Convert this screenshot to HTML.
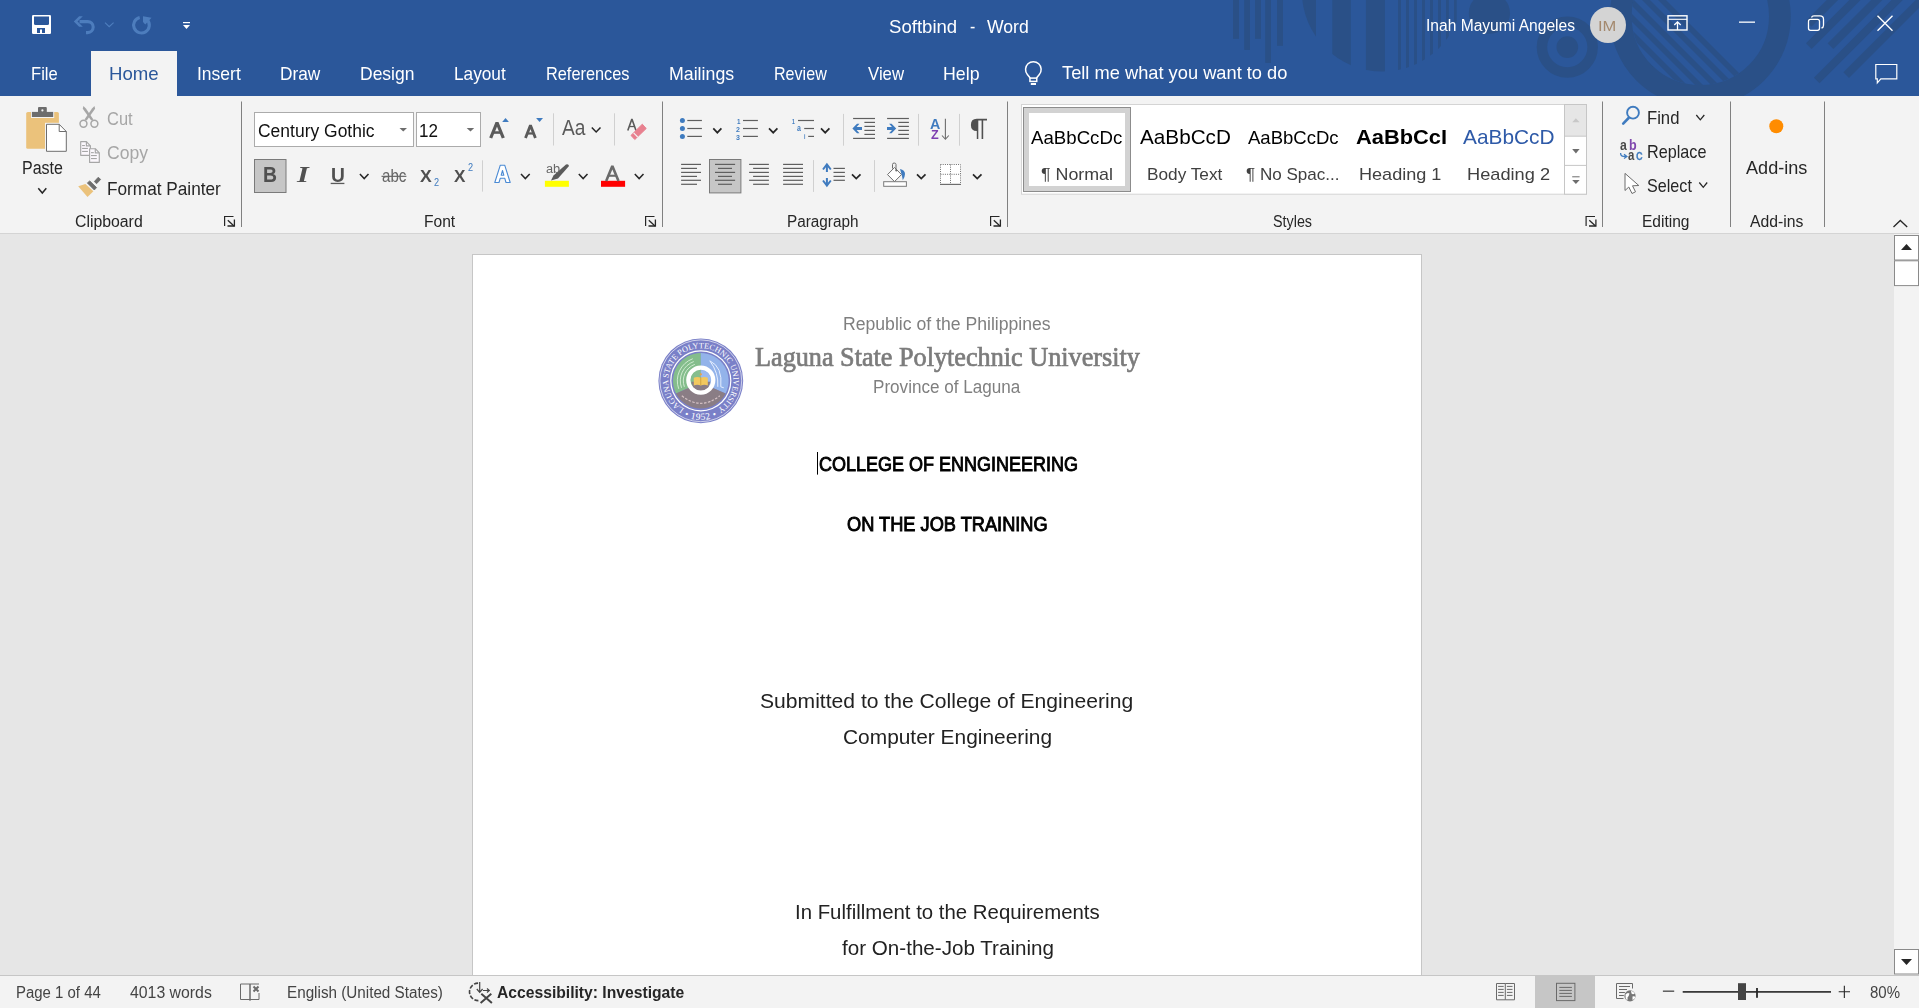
<!DOCTYPE html>
<html><head><meta charset="utf-8"><title>Softbind - Word</title><style>
*{margin:0;padding:0;box-sizing:border-box}
html,body{width:1919px;height:1008px;overflow:hidden;background:#e6e6e6;font-family:"Liberation Sans",sans-serif}
.a{position:absolute}
.t{position:absolute;white-space:pre;transform-origin:0 0}
</style></head>
<body>

<div class="a" style="left:0;top:0;width:1919px;height:96px;background:#2b579a"></div>
<div class="a" style="left:91px;top:51px;width:86px;height:45px;background:#f3f3f3"></div>
<div class="a" style="left:0;top:96px;width:1919px;height:137px;background:#f3f3f3"></div>
<div class="a" style="left:0;top:233px;width:1919px;height:1px;background:#d4d4d4"></div>
<div class="a" style="left:0;top:234px;width:1894px;height:741px;background:#e6e6e6"></div>
<div class="a" style="left:472px;top:254px;width:950px;height:721px;background:#fff;border:1px solid #c6c6c6;border-bottom:none"></div>
<div class="a" style="left:1894px;top:234px;width:25px;height:741px;background:#f3f3f3"></div>
<div class="a" style="left:0;top:975px;width:1919px;height:1px;background:#c6c6c6"></div>
<div class="a" style="left:0;top:976px;width:1919px;height:32px;background:#f3f3f3"></div>
<div class="a" style="left:1535px;top:976px;width:60px;height:32px;background:#c6c6c6"></div>

<svg class="a" style="left:0;top:0" width="1919" height="1008" viewBox="0 0 1919 1008"><defs><clipPath id="tb"><rect x="0" y="0" width="1919" height="96"/></clipPath><clipPath id="c1"><circle cx="1382.3" cy="-8.8" r="80.4"/></clipPath><clipPath id="c2"><circle cx="1700.3" cy="16.4" r="68.7"/></clipPath><filter id="blur1" x="-50%" y="-50%" width="200%" height="200%"><feGaussianBlur stdDeviation="0.7"/></filter></defs><g clip-path="url(#tb)" fill="#2a5087"><rect x="1233" y="0" width="6" height="38.8"/><rect x="1244.2" y="0" width="5.7999999999999545" height="49.9"/><rect x="1255" y="0" width="6" height="38.8"/><rect x="1265.2" y="0" width="5.7999999999999545" height="62.9"/><rect x="1277" y="0" width="6" height="45.8"/><g clip-path="url(#c1)"><rect x="1290" y="-100" width="26.0" height="200"/><rect x="1332.3" y="-100" width="18.5" height="200"/><rect x="1365.9" y="-100" width="19.0" height="200"/><rect x="1398" y="-100" width="3.0" height="200"/><rect x="1406" y="-100" width="3.0" height="200"/><rect x="1414.1" y="-100" width="2.9" height="200"/><rect x="1422" y="-100" width="3.0" height="200"/><rect x="1430" y="-100" width="3.0" height="200"/><rect x="1438" y="-100" width="3.0" height="200"/><rect x="1446" y="-100" width="2.8" height="200"/><rect x="1454" y="-100" width="2.7" height="200"/></g><circle cx="1489.4" cy="13.2" r="20.6"/><circle cx="1567.3" cy="47.1" r="25.35" fill="none" stroke="#2a5087" stroke-width="10.5"/><circle cx="1567.3" cy="47.1" r="10.85"/><circle cx="1700.3" cy="16.4" r="79.6" fill="none" stroke="#2a5087" stroke-width="21.8"/><g clip-path="url(#c2)"><polygon points="1558,-100 1566,-100 1866,200 1858,200"/><polygon points="1542,-100 1550,-100 1850,200 1842,200"/><polygon points="1526,-100 1534,-100 1834,200 1826,200"/><polygon points="1510,-100 1518,-100 1818,200 1810,200"/><polygon points="1494,-100 1502,-100 1802,200 1794,200"/><polygon points="1300,-100 1486,-100 1786,200 1600,200"/></g><line x1="1808.6" y1="23.8" x2="1958.6" y2="-126.2" stroke="#2a5087" stroke-width="8"/><line x1="1808.8" y1="46.2" x2="1958.8" y2="-103.8" stroke="#2a5087" stroke-width="8"/><line x1="1830.5" y1="46.2" x2="1980.5" y2="-103.8" stroke="#2a5087" stroke-width="8"/><line x1="1816.7" y1="80.5" x2="1966.7" y2="-69.5" stroke="#2a5087" stroke-width="8"/><line x1="1846.2" y1="75.2" x2="1996.2" y2="-74.8" stroke="#2a5087" stroke-width="8"/></g><rect x="32" y="15" width="19" height="19" rx="1.2" fill="#fff"/><path d="M34 16.5 H49 V23.5 Q49 25 47.5 25 H35.5 Q34 25 34 23.5 Z" fill="#2b579a"/><rect x="37" y="28" width="8" height="5" fill="#2b579a"/><rect x="40" y="29.5" width="2" height="3.5" fill="#fff"/><path d="M79.5 21.6 H87.7 A5.5 5.5 0 0 1 87.7 32.6 H86" fill="none" stroke="#4d7dbd" stroke-width="3.1"/><polygon points="73.8,21.5 79.1,16.2 82.8,16.2 77.5,21.5 82.8,26.8 79.1,26.8" fill="#4d7dbd"/><path d="M105 22.6 L109.2 26.6 L113.6 22.6" fill="none" stroke="#4d7dbd" stroke-width="1.2"/><path d="M139.7 17.5 A7.85 7.85 0 1 0 147.4 20" fill="none" stroke="#4d7dbd" stroke-width="3.1"/><path d="M143 16.2 L151.5 17.8 L145.3 24.6 L143 22 Z" fill="#4d7dbd"/><rect x="183" y="22" width="7" height="1.2" fill="#fff"/><path d="M183 25 H190 L186.5 29 Z" fill="#fff"/><rect x="1668" y="15.8" width="19" height="14.2" fill="none" stroke="#fff" stroke-width="1.4"/><line x1="1668" y1="19.3" x2="1687" y2="19.3" stroke="#fff" stroke-width="1.1"/><path d="M1677.5 30 V22 M1674.3 25 L1677.5 21.8 L1680.7 25" fill="none" stroke="#fff" stroke-width="1.3"/><rect x="1739" y="21.5" width="16" height="1.3" fill="#fff"/><rect x="1808.5" y="19.3" width="11" height="11" rx="2" fill="none" stroke="#fff" stroke-width="1.3"/><path d="M1811.5 17.5 Q1812 15.8 1814 15.8 H1820 Q1823.5 15.8 1823.5 19.3 V25.5 Q1823.5 27.5 1821.5 28" fill="none" stroke="#fff" stroke-width="1.3"/><path d="M1877.5 15.8 L1892.5 30.8 M1892.5 15.8 L1877.5 30.8" stroke="#fff" stroke-width="1.4"/><path d="M1875.8 64.5 H1896.8 V78.8 H1880.8 L1877.3 82.8 V78.8 H1875.8 Z" fill="none" stroke="#fff" stroke-width="1.2"/><circle cx="1608" cy="25" r="18" fill="#d4d4d4"/><path d="M1030.2 78 L1027.37 74.46 A7.8 7.8 0 1 1 1039.33 74.46 L1036.5 78" fill="none" stroke="#fff" stroke-width="1.5"/><rect x="1029.95" y="78.1" width="6.8" height="3.3" fill="none" stroke="#fff" stroke-width="1.5"/><rect x="1030.8" y="83" width="5.2" height="2" fill="#fff"/><rect x="241" y="101.5" width="1" height="125.5" fill="#808080"/><rect x="662" y="101.5" width="1" height="125.5" fill="#808080"/><rect x="1007" y="101.5" width="1" height="125.5" fill="#808080"/><rect x="1602" y="101.5" width="1" height="125.5" fill="#808080"/><rect x="1730" y="101.5" width="1" height="125.5" fill="#808080"/><rect x="1824" y="101.5" width="1" height="125.5" fill="#808080"/><path d="M224.6 226 V216.5 H233.5" fill="none" stroke="#262626" stroke-width="1.2"/><path d="M227.8 220.2 L234 226" stroke="#262626" stroke-width="1.3"/><path d="M234.4 219.5 V226 H227.5" fill="none" stroke="#262626" stroke-width="1.3"/><path d="M645.6 226 V216.5 H654.5" fill="none" stroke="#262626" stroke-width="1.2"/><path d="M648.8 220.2 L655 226" stroke="#262626" stroke-width="1.3"/><path d="M655.4 219.5 V226 H648.5" fill="none" stroke="#262626" stroke-width="1.3"/><path d="M990.6 226 V216.5 H999.5" fill="none" stroke="#262626" stroke-width="1.2"/><path d="M993.8 220.2 L1000 226" stroke="#262626" stroke-width="1.3"/><path d="M1000.4 219.5 V226 H993.5" fill="none" stroke="#262626" stroke-width="1.3"/><path d="M1586.1 226 V216.5 H1595.0" fill="none" stroke="#262626" stroke-width="1.2"/><path d="M1589.3 220.2 L1595.5 226" stroke="#262626" stroke-width="1.3"/><path d="M1595.9 219.5 V226 H1589.0" fill="none" stroke="#262626" stroke-width="1.3"/><rect x="26.2" y="111.9" width="32.7" height="36.9" rx="1.6" fill="#ebc27b"/><rect x="31" y="111.5" width="23.2" height="6.5" fill="#f3f3f3"/><rect x="31.9" y="111.9" width="21.3" height="5.1" fill="#6d6d6d"/><rect x="38" y="107.1" width="8.8" height="6" rx="1" fill="#6d6d6d"/><circle cx="42.4" cy="110.4" r="1.1" fill="#f3f3f3"/><rect x="45" y="122.8" width="22.8" height="30" fill="#f3f3f3"/><path d="M46.5 124.3 H59.2 L66.3 131.5 V151.3 H46.5 Z" fill="#fff" stroke="#6d6d6d" stroke-width="1"/><path d="M59.2 124.3 V131.5 H66.3" fill="none" stroke="#6d6d6d" stroke-width="1"/><path d="M38.3 188.3 L42.3 193 L46.3 188.3" fill="none" stroke="#262626" stroke-width="1.5"/><circle cx="83.47" cy="123.7" r="3.45" fill="none" stroke="#a6a6a6" stroke-width="1.5"/><circle cx="94.4" cy="123.7" r="3.45" fill="none" stroke="#a6a6a6" stroke-width="1.5"/><polygon points="83.4,106 85.9,108.6 93.4,119.6 91.2,120.6 82.8,108.8" fill="#a6a6a6"/><polygon points="94.5,106 92,108.6 84.5,119.6 86.7,120.6 95.1,108.8" fill="#a6a6a6"/><path d="M80.7 141.6 H86.4 L90.4 145.79999999999998 V155.29999999999998 H80.7 Z" fill="#fbf7fc" stroke="#a6a6a6" stroke-width="1.15" stroke-linejoin="round"/><path d="M86.4 141.6 V145.79999999999998 H90.4" fill="none" stroke="#a6a6a6" stroke-width="1.15"/><rect x="82.10000000000001" y="145.0" width="2.8" height="1.1" fill="#a6a6a6"/><rect x="82.10000000000001" y="147.9" width="5.8" height="1.1" fill="#a6a6a6"/><rect x="82.10000000000001" y="150.9" width="5.8" height="1.1" fill="#a6a6a6"/><path d="M89.6 148.7 H95.3 L99.3 152.89999999999998 V162.39999999999998 H89.6 Z" fill="#fbf7fc" stroke="#a6a6a6" stroke-width="1.15" stroke-linejoin="round"/><path d="M95.3 148.7 V152.89999999999998 H99.3" fill="none" stroke="#a6a6a6" stroke-width="1.15"/><rect x="91.0" y="152.1" width="2.8" height="1.1" fill="#a6a6a6"/><rect x="91.0" y="155.0" width="5.8" height="1.1" fill="#a6a6a6"/><rect x="91.0" y="158.0" width="5.8" height="1.1" fill="#a6a6a6"/><polygon points="78.2,186.2 85.4,183.9 93.4,191.2 87.5,196.9" fill="#ebc27b"/><polygon points="87.3,182.9 89.8,180.9 96.6,187.6 94.3,190" fill="#6d6d6d" stroke="#6d6d6d" stroke-width="0.8" stroke-linejoin="round"/><polygon points="94.3,181.6 98.2,177.3 100.7,179.4 96.6,183.7" fill="#6d6d6d" stroke="#6d6d6d" stroke-width="0.8" stroke-linejoin="round"/><rect x="254.5" y="112.5" width="159" height="34" fill="#fff" stroke="#ababab" stroke-width="1"/><rect x="416.5" y="112.5" width="64" height="34" fill="#fff" stroke="#ababab" stroke-width="1"/><path d="M399.5 128 H407 L403.25 131.5 Z" fill="#6d6d6d"/><path d="M466.7 128 H474.2 L470.45 131.5 Z" fill="#6d6d6d"/><path d="M490.70000000000005 138 L497.0 122.5 L503.29999999999995 138" fill="none" stroke="#5a5a5a" stroke-width="3.2" stroke-linejoin="miter" stroke-miterlimit="1"/><line x1="493.05" y1="132.528" x2="500.95" y2="132.528" stroke="#5a5a5a" stroke-width="2.5600000000000005"/><path d="M502.2 121.9 L505.55 118.1 L508.9 121.9 Z" fill="#3f7bbf"/><path d="M525.5 138 L530.45 125.2 L535.4 138" fill="none" stroke="#5a5a5a" stroke-width="2.8" stroke-linejoin="miter" stroke-miterlimit="1"/><line x1="527.275" y1="133.456" x2="533.625" y2="133.456" stroke="#5a5a5a" stroke-width="2.2399999999999998"/><path d="M536.1 118 H543 L539.55 122 Z" fill="#3f7bbf"/><rect x="553" y="113.3" width="1" height="32.2" fill="#d0d0d0"/><rect x="614" y="113.3" width="1" height="32.2" fill="#d0d0d0"/><path d="M591.8 127.5 L596.15 132 L600.5 127.5" fill="none" stroke="#262626" stroke-width="1.5"/><path d="M627.8 130.5 L631.9 118.89999999999999 L636.0 130.5" fill="none" stroke="#5a5a5a" stroke-width="1.6" stroke-linejoin="miter" stroke-miterlimit="1"/><line x1="629.45" y1="126.532" x2="634.3499999999999" y2="126.532" stroke="#5a5a5a" stroke-width="1.2800000000000002"/><path d="M642.3 124.2 L646.2 128.5 L634.8 139.5 L631 135.4 Z" fill="#e8808f" stroke="#e8808f" stroke-width="1" stroke-linejoin="round"/><line x1="633.6" y1="132.8" x2="637.7" y2="137" stroke="#f3f3f3" stroke-width="1.1"/><rect x="254.5" y="159.5" width="31.5" height="33" fill="#c6c6c6" stroke="#7a7a7a" stroke-width="1"/><rect x="330.7" y="182.8" width="13.7" height="1.3" fill="#5a5a5a"/><path d="M359.9 174 L364.2 178.6 L368.5 174" fill="none" stroke="#262626" stroke-width="1.5"/><line x1="381.5" y1="176.3" x2="406.4" y2="176.3" stroke="#5a5a5a" stroke-width="1.1"/><rect x="482" y="160.3" width="1" height="31.299999999999983" fill="#d0d0d0"/><path d="M494.8 182.5 L500.3 165.2 H504.7 L510.2 182.5 H506 L504.8 178.3 H500.2 L499 182.5 Z M501.2 175.2 H503.8 L502.5 170.5 Z" fill="#fff" stroke="#4a8ad4" stroke-width="1.1" stroke-linejoin="round"/><path d="M521 174 L525.35 178.6 L529.7 174" fill="none" stroke="#262626" stroke-width="1.5"/><rect x="544.9" y="180.8" width="24" height="6" fill="#ffff00"/><path d="M551 180.5 L553.5 175.5 L566 164.5 Q568.5 163.5 569 166 L558 178.5 Z" fill="#5a5a5a"/><path d="M578.8 174 L583.15 178.6 L587.5 174" fill="none" stroke="#262626" stroke-width="1.5"/><rect x="601" y="180.8" width="24.1" height="6" fill="#ff0000"/><path d="M606.1999999999999 181 L612.3499999999999 165.9 L618.5 181" fill="none" stroke="#6a6a6a" stroke-width="2.6" stroke-linejoin="miter" stroke-miterlimit="1"/><line x1="608.625" y1="175.752" x2="616.0749999999999" y2="175.752" stroke="#6a6a6a" stroke-width="2.08"/><path d="M634.8 174 L639.15 178.6 L643.5 174" fill="none" stroke="#262626" stroke-width="1.5"/><circle cx="682.4" cy="120.5" r="2.5" fill="#3f7bbf"/><rect x="687.3" y="119.9" width="14.6" height="1.2" fill="#5f5f5f"/><circle cx="682.4" cy="128.5" r="2.5" fill="#3f7bbf"/><rect x="687.3" y="127.9" width="14.6" height="1.2" fill="#5f5f5f"/><circle cx="682.4" cy="136.4" r="2.5" fill="#3f7bbf"/><rect x="687.3" y="135.8" width="14.6" height="1.2" fill="#5f5f5f"/><path d="M713.3 128.4 L717.3499999999999 132.7 L721.4 128.4" fill="none" stroke="#262626" stroke-width="1.7"/><rect x="743" y="119.9" width="14.9" height="1.2" fill="#5f5f5f"/><rect x="743" y="127.9" width="14.9" height="1.2" fill="#5f5f5f"/><rect x="743" y="135.8" width="14.9" height="1.2" fill="#5f5f5f"/><path d="M769 128.4 L773.2 132.7 L777.4 128.4" fill="none" stroke="#262626" stroke-width="1.7"/><rect x="798" y="119.9" width="16" height="1.2" fill="#5f5f5f"/><rect x="804.2" y="127.9" width="9.8" height="1.2" fill="#5f5f5f"/><rect x="808.2" y="135.8" width="5.8" height="1.2" fill="#5f5f5f"/><path d="M821 128.4 L825.2 132.7 L829.4 128.4" fill="none" stroke="#262626" stroke-width="1.7"/><rect x="843" y="113.9" width="1" height="31.799999999999983" fill="#d0d0d0"/><rect x="853.1" y="117.9" width="21.9" height="1.2" fill="#5f5f5f"/><rect x="887.1" y="117.9" width="21.8" height="1.2" fill="#5f5f5f"/><rect x="864.4" y="121.80000000000001" width="10.6" height="1.2" fill="#5f5f5f"/><rect x="898.3" y="121.80000000000001" width="10.6" height="1.2" fill="#5f5f5f"/><rect x="864.4" y="125.80000000000001" width="10.6" height="1.2" fill="#5f5f5f"/><rect x="898.3" y="125.80000000000001" width="10.6" height="1.2" fill="#5f5f5f"/><rect x="864.4" y="129.8" width="10.6" height="1.2" fill="#5f5f5f"/><rect x="898.3" y="129.8" width="10.6" height="1.2" fill="#5f5f5f"/><rect x="864.4" y="133.8" width="10.6" height="1.2" fill="#5f5f5f"/><rect x="898.3" y="133.8" width="10.6" height="1.2" fill="#5f5f5f"/><rect x="853.1" y="137.8" width="21.9" height="1.2" fill="#5f5f5f"/><rect x="887.1" y="137.8" width="21.8" height="1.2" fill="#5f5f5f"/><path d="M852.4 128.5 L857 123.8 H859.5 L856.6 126.9 H862 V130.1 H856.6 L859.5 133.2 H857 Z" fill="#3f7bbf"/><path d="M896.2 128.5 L891.6 123.8 H889.1 L892 126.9 H887 V130.1 H892 L889.1 133.2 H891.6 Z" fill="#3f7bbf"/><rect x="918" y="113.9" width="1" height="31.799999999999983" fill="#d0d0d0"/><path d="M945.4 118.7 V139" stroke="#6d6d6d" stroke-width="1.1"/><path d="M942 135.5 L945.4 139.3 L948.8 135.5" fill="none" stroke="#6d6d6d" stroke-width="1.1"/><rect x="959" y="113.9" width="1" height="31.799999999999983" fill="#d0d0d0"/><path d="M976.8 118.7 H987 V120.4 H983.2 V139.1 H981.6 V120.4 H978.3 V139.1 H976.8 V131.1 Q970.9 131 970.9 124.9 Q970.9 118.8 976.8 118.7 Z" fill="#505050"/><rect x="681.1" y="163.8" width="19.9" height="1.2" fill="#5f5f5f"/><rect x="681.1" y="167.8" width="15.9" height="1.2" fill="#5f5f5f"/><rect x="681.1" y="171.8" width="19.9" height="1.2" fill="#5f5f5f"/><rect x="681.1" y="175.8" width="15.9" height="1.2" fill="#5f5f5f"/><rect x="681.1" y="179.70000000000002" width="19.9" height="1.2" fill="#5f5f5f"/><rect x="681.1" y="183.70000000000002" width="15.9" height="1.2" fill="#5f5f5f"/><rect x="709.5" y="159.5" width="31.4" height="33.4" fill="#c6c6c6" stroke="#7a7a7a" stroke-width="1"/><rect x="715" y="163.8" width="20.1" height="1.2" fill="#5f5f5f"/><rect x="749.1" y="163.8" width="19.8" height="1.2" fill="#5f5f5f"/><rect x="783.1" y="163.8" width="19.9" height="1.2" fill="#5f5f5f"/><rect x="718" y="167.8" width="14" height="1.2" fill="#5f5f5f"/><rect x="753.1" y="167.8" width="15.8" height="1.2" fill="#5f5f5f"/><rect x="783.1" y="167.8" width="19.9" height="1.2" fill="#5f5f5f"/><rect x="715" y="171.8" width="20.1" height="1.2" fill="#5f5f5f"/><rect x="749.1" y="171.8" width="19.8" height="1.2" fill="#5f5f5f"/><rect x="783.1" y="171.8" width="19.9" height="1.2" fill="#5f5f5f"/><rect x="718" y="175.8" width="14" height="1.2" fill="#5f5f5f"/><rect x="753.1" y="175.8" width="15.8" height="1.2" fill="#5f5f5f"/><rect x="783.1" y="175.8" width="19.9" height="1.2" fill="#5f5f5f"/><rect x="715" y="179.70000000000002" width="20.1" height="1.2" fill="#5f5f5f"/><rect x="749.1" y="179.70000000000002" width="19.8" height="1.2" fill="#5f5f5f"/><rect x="783.1" y="179.70000000000002" width="19.9" height="1.2" fill="#5f5f5f"/><rect x="718" y="183.70000000000002" width="14" height="1.2" fill="#5f5f5f"/><rect x="753.1" y="183.70000000000002" width="15.8" height="1.2" fill="#5f5f5f"/><rect x="783.1" y="183.70000000000002" width="19.9" height="1.2" fill="#5f5f5f"/><rect x="813" y="160.1" width="1" height="31.80000000000001" fill="#d0d0d0"/><path d="M826.9 165 V172 M826.9 178 V185" stroke="#3f7bbf" stroke-width="2"/><path d="M823 169.5 L826.9 164.5 L830.8 169.5" fill="none" stroke="#3f7bbf" stroke-width="2"/><path d="M823 180.5 L826.9 185.5 L830.8 180.5" fill="none" stroke="#3f7bbf" stroke-width="2"/><rect x="833.5" y="167.8" width="11.4" height="1.2" fill="#5f5f5f"/><rect x="833.5" y="171.8" width="11.4" height="1.2" fill="#5f5f5f"/><rect x="833.5" y="175.8" width="11.4" height="1.2" fill="#5f5f5f"/><rect x="833.5" y="179.70000000000002" width="11.4" height="1.2" fill="#5f5f5f"/><path d="M852 174.3 L856.25 178.6 L860.5 174.3" fill="none" stroke="#262626" stroke-width="1.7"/><rect x="874" y="160.1" width="1" height="31.80000000000001" fill="#d0d0d0"/><rect x="883.7" y="181.7" width="22.7" height="4.6" fill="#fff" stroke="#7a7a7a" stroke-width="1"/><path d="M894.5 167.5 L901.5 174.6 L894.5 181.6 L887.5 174.6 Z" fill="#fff" stroke="#6d6d6d" stroke-width="1"/><path d="M892.5 168.5 V164.5 Q892.5 163 894.2 163 Q896 163 896 164.5 V170.5" fill="none" stroke="#6d6d6d" stroke-width="1"/><circle cx="896.3" cy="170.5" r="1" fill="#6d6d6d"/><path d="M900 169 Q905 170 905 174 Q905 177 902.8 180.3 L902 176 Z" fill="#3f7bbf"/><path d="M917 174.3 L921.25 178.6 L925.5 174.3" fill="none" stroke="#262626" stroke-width="1.7"/><rect x="940" y="164" width="21" height="20.5" fill="#fff"/><path d="M940.5 164.5 H960.5 V184 M940.5 164.5 V184 M950.5 164.5 V184 M940.5 174.3 H960.5" fill="none" stroke="#6d6d6d" stroke-width="1" stroke-dasharray="1 1.2"/><rect x="940" y="183.8" width="21" height="1.2" fill="#6d6d6d"/><path d="M973 174.3 L977.25 178.6 L981.5 174.3" fill="none" stroke="#262626" stroke-width="1.7"/><rect x="1021.5" y="104.5" width="565" height="89.7" fill="#fff" stroke="#d4d4d4" stroke-width="1"/><rect x="1023.5" y="107.5" width="107" height="84" fill="#d2d2d2" stroke="#8c8c8c" stroke-width="1"/><rect x="1029" y="113" width="96" height="73" fill="#fff"/><rect x="1564.5" y="104.5" width="22" height="89.7" fill="#fff" stroke="#c6c6c6" stroke-width="1"/><rect x="1565" y="105" width="21" height="31" fill="#e6e6e6"/><line x1="1564.5" y1="136.2" x2="1586.5" y2="136.2" stroke="#c6c6c6" stroke-width="1"/><line x1="1564.5" y1="165.4" x2="1586.5" y2="165.4" stroke="#c6c6c6" stroke-width="1"/><path d="M1572.2 122.3 H1579.6 L1575.9 118.3 Z" fill="#c8c8c8"/><path d="M1572.2 149 H1579.6 L1575.9 153.5 Z" fill="#6d6d6d"/><rect x="1572.2" y="176.3" width="7.4" height="1" fill="#6d6d6d"/><path d="M1572.2 180 H1579.6 L1575.9 184 Z" fill="#6d6d6d"/><circle cx="1633" cy="112.7" r="5.9" fill="none" stroke="#3f7bbf" stroke-width="1.9"/><line x1="1623.2" y1="123.6" x2="1628.6" y2="118" stroke="#3f7bbf" stroke-width="2.6" stroke-linecap="round"/><path d="M1696.3 115 L1700.3 119.8 L1704.3 115" fill="none" stroke="#262626" stroke-width="1.3"/><path d="M1620.6 153 Q1620.6 156.4 1623.6 156.4 H1627 M1624 154.2 L1626.9 156.4 L1624 158.6" fill="none" stroke="#3f7bbf" stroke-width="1.3"/><path d="M1625 173.4 V190.5 L1628.8 187 L1632 193.5 L1635.5 191.8 L1632.5 185.8 L1638.8 185.5 Z" fill="#fff" stroke="#6d6d6d" stroke-width="1" stroke-linejoin="round"/><path d="M1699.3 182.5 L1703.25 187.3 L1707.2 182.5" fill="none" stroke="#262626" stroke-width="1.3"/><circle cx="1776.3" cy="126.3" r="7" fill="#ff8c00" filter="url(#blur1)"/><path d="M1893.5 227 L1900.3 220.5 L1907.2 227" fill="none" stroke="#262626" stroke-width="1.3"/><rect x="1894.5" y="235.5" width="24" height="24.5" fill="#fff" stroke="#8a8a8a" stroke-width="1"/><path d="M1901 250 H1912 L1906.5 244 Z" fill="#262626"/><rect x="1894.5" y="260.8" width="24" height="24.8" fill="#fff" stroke="#8a8a8a" stroke-width="1"/><rect x="1894.5" y="949.5" width="24" height="24.5" fill="#fff" stroke="#8a8a8a" stroke-width="1"/><path d="M1901 959 H1912 L1906.5 965 Z" fill="#262626"/><rect x="817" y="452" width="1" height="22.6" fill="#000"/><circle cx="700.8" cy="380.8" r="42.4" fill="#7a80c8"/><circle cx="700.8" cy="380.8" r="40.9" fill="none" stroke="#fff" stroke-width="0.8" opacity="0.8"/><path id="lgtop" d="M696.26 413.08 A32.6 32.6 0 1 1 705.34 413.08" fill="none"/><path id="lgbot" d="M675.60 410.83 A39.2 39.2 0 0 0 726.00 410.83" fill="none"/><text font-family="Liberation Serif" font-size="8.2" fill="#fff" letter-spacing="0"><textPath href="#lgtop" startOffset="50%" text-anchor="middle">LAGUNA STATE POLYTECHNIC UNIVERSITY</textPath></text><text font-family="Liberation Serif" font-size="9.6" fill="#fff" letter-spacing="0.5"><textPath href="#lgbot" startOffset="50%" text-anchor="middle">• 1952 •</textPath></text><circle cx="700.8" cy="380.8" r="30.6" fill="#fff"/><circle cx="700.8" cy="380.8" r="29.4" fill="#7a80c8"/><path d="M700.8 382.8 L700.8 353.0 A27.8 27.8 0 0 0 676.03 393.42 Z" fill="#84bd8c"/><path d="M700.8 382.8 L700.8 353.0 A27.8 27.8 0 0 1 725.57 393.42 Z" fill="#93b3ea"/><path d="M700.8 382.8 L725.57 393.42 A27.8 27.8 0 0 1 676.03 393.42 Z" fill="#8a7d85"/><path d="M684.36 386.79 A17.5 17.5 0 0 1 694.81 364.36" fill="none" stroke="#d8efd8" stroke-width="0.9"/><path d="M681.54 387.81 A20.5 20.5 0 0 1 693.79 361.54" fill="none" stroke="#d8efd8" stroke-width="0.9"/><path d="M678.72 388.84 A23.5 23.5 0 0 1 692.76 358.72" fill="none" stroke="#d8efd8" stroke-width="0.9"/><path d="M709.8 360.8 Q722.8 366.8 720.8 386.8 L723.8 387.8 M709.8 360.8 Q718.8 372.8 717.8 386.8" fill="none" stroke="#e6efff" stroke-width="1"/><path d="M681.8 395.8 Q700.8 410.8 719.8 395.8" fill="none" stroke="#d6c3c6" stroke-width="1.2" stroke-dasharray="2.5 1.5"/><circle cx="700.8" cy="380.1" r="12.5" fill="none" stroke="#fff" stroke-width="4.2"/><path d="M700.8 380.1 V370.40000000000003 A9.7 9.7 0 0 0 691.1999999999999 381.8 Z" fill="#86bd8e"/><path d="M700.8 380.1 V370.40000000000003 A9.7 9.7 0 0 1 710.4 381.8 Z" fill="#9cbaf0"/><path d="M691.1999999999999 381.8 A9.7 9.7 0 0 0 710.4 381.8 Z" fill="#8a7d85"/><path d="M693.8 377.8 Q697.3 376.3 700.8 377.8 Q704.3 376.3 707.8 377.8 V385.40000000000003 Q704.3 384.2 700.8 385.40000000000003 Q697.3 384.2 693.8 385.40000000000003 Z" fill="#f2c85e"/><rect x="700.4" y="377.3" width="0.8" height="8" fill="#c89a3a"/><circle cx="700.8" cy="374.3" r="1.1" fill="#f0a040"/><path d="M240.5 984 H250 V999.5 H240.5 Z M250 984 H259 M250 999.5 H259" fill="none" stroke="#6a6a6a" stroke-width="1"/><path d="M250 984 V1001" stroke="#6a6a6a" stroke-width="1"/><path d="M253.5 986.5 L258.5 991.5 M258.5 986.5 L253.5 991.5" stroke="#6a6a6a" stroke-width="2"/><path d="M259 993 V999.5" stroke="#6a6a6a" stroke-width="1"/><path d="M478.1 983.1 A8.7 8.7 0 0 0 478.4 1000.6" fill="none" stroke="#444" stroke-width="1.6" stroke-dasharray="4.2 1.6"/><path d="M479.7 982 V992 M476.8 989 L479.7 992.3 L482.6 989" fill="none" stroke="#444" stroke-width="1.2"/><path d="M483 990.5 H489 M487 988.5 L489.3 990.5 L487 992.5" fill="none" stroke="#444" stroke-width="1.2"/><path d="M481.3 993.8 L491.9 1003 M491.3 993.8 L480.6 1003" stroke="#444" stroke-width="2"/><path d="M1496.5 983.5 H1505.3 V999.8 H1496.5 Z M1505.3 983.5 H1514.5 V999.8 H1505.3" fill="none" stroke="#6a6a6a" stroke-width="1"/><rect x="1498.1" y="985.9" width="5.6" height="1" fill="#6a6a6a"/><rect x="1506.9" y="985.9" width="5.6" height="1" fill="#6a6a6a"/><rect x="1498.1" y="988.9" width="5.6" height="1" fill="#6a6a6a"/><rect x="1506.9" y="988.9" width="5.6" height="1" fill="#6a6a6a"/><rect x="1498.1" y="991.9" width="5.6" height="1" fill="#6a6a6a"/><rect x="1506.9" y="991.9" width="5.6" height="1" fill="#6a6a6a"/><rect x="1498.1" y="994.9" width="5.6" height="1" fill="#6a6a6a"/><rect x="1506.9" y="994.9" width="5.6" height="1" fill="#6a6a6a"/><rect x="1556.5" y="983.3" width="18.4" height="17.3" fill="none" stroke="#6a6a6a" stroke-width="1"/><rect x="1559.3" y="986.9" width="12.6" height="1" fill="#6a6a6a"/><rect x="1559.3" y="989.9" width="12.6" height="1" fill="#6a6a6a"/><rect x="1559.3" y="992.9" width="12.6" height="1" fill="#6a6a6a"/><rect x="1559.3" y="995.9" width="12.6" height="1" fill="#6a6a6a"/><path d="M1623.5 998.5 H1616.5 V983.5 H1632.5 V988.5" fill="none" stroke="#6a6a6a" stroke-width="1"/><rect x="1619" y="986.0" width="11" height="1" fill="#6a6a6a"/><rect x="1619" y="989.0" width="8" height="1" fill="#6a6a6a"/><rect x="1619" y="992.0" width="6" height="1" fill="#6a6a6a"/><rect x="1619" y="995.0" width="5" height="1" fill="#6a6a6a"/><circle cx="1630" cy="995.9" r="6.2" fill="#f3f3f3"/><circle cx="1630" cy="995.9" r="5.6" fill="#777"/><path d="M1625.5 994.5 Q1627.5 992 1629.5 993.5 Q1629 996 1627.5 997.5 Q1628 999.5 1627 1000.5 Q1625 998.5 1625.5 994.5 Z M1631 990.8 Q1633.5 991.5 1634.8 993.5 Q1633 994.8 1631.5 993.5 Z M1632.5 996.5 Q1634.5 996 1635.5 997 Q1634.5 999.5 1632.5 1000 Z" fill="#fff"/><rect x="1662.9" y="990.6" width="11.3" height="1.1" fill="#262626"/><rect x="1682.7" y="991.1" width="148.3" height="1.6" fill="#262626"/><rect x="1738" y="983.2" width="8" height="16.8" fill="#444"/><rect x="1756.1" y="988" width="1.8" height="9.8" fill="#262626"/><path d="M1838.7 991.8 H1850 M1844.35 985.7 V997.9" stroke="#262626" stroke-width="1.1"/></svg>
<span class="t" style="left:889.42px;top:17px;font-family:'Liberation Sans';font-weight:400;font-size:19px;line-height:19px;color:#ffffff;transform:scaleX(0.9783);">Softbind</span><span class="t" style="left:970.00px;top:17px;font-family:'Liberation Sans';font-weight:400;font-size:19px;line-height:19px;color:#ffffff;transform:scaleX(0.8333);">-</span><span class="t" style="left:987.00px;top:17px;font-family:'Liberation Sans';font-weight:400;font-size:19px;line-height:19px;color:#ffffff;transform:scaleX(0.9278);">Word</span><span class="t" style="left:1425.63px;top:18px;font-family:'Liberation Sans';font-weight:400;font-size:16px;line-height:16px;color:#ffffff;transform:scaleX(0.9743);">Inah Mayumi Angeles</span><span class="t" style="left:1598.40px;top:18px;font-family:'Liberation Sans';font-weight:400;font-size:15px;line-height:15px;color:#a4896e;transform:scaleX(1.1000);">IM</span><span class="t" style="left:30.83px;top:64px;font-family:'Liberation Sans';font-weight:400;font-size:19px;line-height:19px;color:#ffffff;transform:scaleX(0.8724);">File</span><span class="t" style="left:109.02px;top:64px;font-family:'Liberation Sans';font-weight:400;font-size:19px;line-height:19px;color:#2b579a;transform:scaleX(0.9796);">Home</span><span class="t" style="left:196.58px;top:64px;font-family:'Liberation Sans';font-weight:400;font-size:19px;line-height:19px;color:#ffffff;transform:scaleX(0.9213);">Insert</span><span class="t" style="left:279.89px;top:64px;font-family:'Liberation Sans';font-weight:400;font-size:19px;line-height:19px;color:#ffffff;transform:scaleX(0.9091);">Draw</span><span class="t" style="left:359.88px;top:64px;font-family:'Liberation Sans';font-weight:400;font-size:19px;line-height:19px;color:#ffffff;transform:scaleX(0.9207);">Design</span><span class="t" style="left:454.09px;top:64px;font-family:'Liberation Sans';font-weight:400;font-size:19px;line-height:19px;color:#ffffff;transform:scaleX(0.9070);">Layout</span><span class="t" style="left:545.84px;top:64px;font-family:'Liberation Sans';font-weight:400;font-size:19px;line-height:19px;color:#ffffff;transform:scaleX(0.8594);">References</span><span class="t" style="left:668.77px;top:64px;font-family:'Liberation Sans';font-weight:400;font-size:19px;line-height:19px;color:#ffffff;transform:scaleX(0.9348);">Mailings</span><span class="t" style="left:774.15px;top:64px;font-family:'Liberation Sans';font-weight:400;font-size:19px;line-height:19px;color:#ffffff;transform:scaleX(0.8468);">Review</span><span class="t" style="left:867.50px;top:64px;font-family:'Liberation Sans';font-weight:400;font-size:19px;line-height:19px;color:#ffffff;transform:scaleX(0.8829);">View</span><span class="t" style="left:943.07px;top:64px;font-family:'Liberation Sans';font-weight:400;font-size:19px;line-height:19px;color:#ffffff;transform:scaleX(0.9342);">Help</span><span class="t" style="left:1062.00px;top:63px;font-family:'Liberation Sans';font-weight:400;font-size:19px;line-height:19px;color:#ffffff;transform:scaleX(0.9615);">Tell me what you want to do</span><span class="t" style="left:22.11px;top:159px;font-family:'Liberation Sans';font-weight:400;font-size:18px;line-height:18px;color:#262626;transform:scaleX(0.8889);">Paste</span><span class="t" style="left:106.50px;top:110px;font-family:'Liberation Sans';font-weight:400;font-size:18px;line-height:18px;color:#a6a6a6;transform:scaleX(0.9138);">Cut</span><span class="t" style="left:106.50px;top:144px;font-family:'Liberation Sans';font-weight:400;font-size:18px;line-height:18px;color:#a6a6a6;transform:scaleX(0.9762);">Copy</span><span class="t" style="left:106.52px;top:180px;font-family:'Liberation Sans';font-weight:400;font-size:18.5px;line-height:18.5px;color:#262626;transform:scaleX(0.9299);">Format Painter</span><span class="t" style="left:74.50px;top:214px;font-family:'Liberation Sans';font-weight:400;font-size:16px;line-height:16px;color:#262626;transform:scaleX(0.9882);">Clipboard</span><span class="t" style="left:257.50px;top:122px;font-family:'Liberation Sans';font-weight:400;font-size:18px;line-height:18px;color:#111;transform:scaleX(0.9708);">Century Gothic</span><span class="t" style="left:419.05px;top:122px;font-family:'Liberation Sans';font-weight:400;font-size:18px;line-height:18px;color:#111;transform:scaleX(0.9474);">12</span><span class="t" style="left:423.93px;top:214px;font-family:'Liberation Sans';font-weight:400;font-size:16px;line-height:16px;color:#262626;transform:scaleX(0.9742);">Font</span><span class="t" style="left:786.64px;top:214px;font-family:'Liberation Sans';font-weight:400;font-size:16px;line-height:16px;color:#262626;transform:scaleX(0.9562);">Paragraph</span><span class="t" style="left:1031.30px;top:128px;font-family:'Liberation Sans';font-weight:400;font-size:19px;line-height:19px;color:#000;transform:scaleX(0.9817);">AaBbCcDc</span><span class="t" style="left:1041.30px;top:166px;font-family:'Liberation Sans';font-weight:400;font-size:17px;line-height:17px;color:#404040;transform:scaleX(1.0485);">¶ Normal</span><span class="t" style="left:1139.80px;top:126px;font-family:'Liberation Sans';font-weight:400;font-size:21px;line-height:21px;color:#000;transform:scaleX(0.9859);">AaBbCcD</span><span class="t" style="left:1146.59px;top:166px;font-family:'Liberation Sans';font-weight:400;font-size:17px;line-height:17px;color:#404040;transform:scaleX(1.0135);">Body Text</span><span class="t" style="left:1247.60px;top:128px;font-family:'Liberation Sans';font-weight:400;font-size:19px;line-height:19px;color:#000;transform:scaleX(0.9753);">AaBbCcDc</span><span class="t" style="left:1246.00px;top:166px;font-family:'Liberation Sans';font-weight:400;font-size:17px;line-height:17px;color:#404040;transform:scaleX(1.0033);">¶ No Spac...</span><span class="t" style="left:1355.50px;top:127px;font-family:'Liberation Sans';font-weight:700;font-size:20px;line-height:20px;color:#000;transform:scaleX(1.0928);">AaBbCcI</span><span class="t" style="left:1359.14px;top:166px;font-family:'Liberation Sans';font-weight:400;font-size:17px;line-height:17px;color:#404040;transform:scaleX(1.0632);">Heading 1</span><span class="t" style="left:1463.40px;top:126px;font-family:'Liberation Sans';font-weight:400;font-size:21px;line-height:21px;color:#2e5aa8;transform:scaleX(0.9924);">AaBbCcD</span><span class="t" style="left:1466.93px;top:166px;font-family:'Liberation Sans';font-weight:400;font-size:17px;line-height:17px;color:#404040;transform:scaleX(1.0711);">Heading 2</span><span class="t" style="left:1273.30px;top:214px;font-family:'Liberation Sans';font-weight:400;font-size:16px;line-height:16px;color:#262626;transform:scaleX(0.8955);">Styles</span><span class="t" style="left:1647.10px;top:109px;font-family:'Liberation Sans';font-weight:400;font-size:18.5px;line-height:18.5px;color:#262626;transform:scaleX(0.9000);">Find</span><span class="t" style="left:1647.42px;top:143px;font-family:'Liberation Sans';font-weight:400;font-size:18.5px;line-height:18.5px;color:#262626;transform:scaleX(0.8761);">Replace</span><span class="t" style="left:1647.13px;top:177px;font-family:'Liberation Sans';font-weight:400;font-size:18.5px;line-height:18.5px;color:#262626;transform:scaleX(0.8725);">Select</span><span class="t" style="left:1641.83px;top:214px;font-family:'Liberation Sans';font-weight:400;font-size:16px;line-height:16px;color:#262626;transform:scaleX(0.9708);">Editing</span><span class="t" style="left:1746.40px;top:159px;font-family:'Liberation Sans';font-weight:400;font-size:18.5px;line-height:18.5px;color:#262626;transform:scaleX(0.9778);">Add-ins</span><span class="t" style="left:1750.30px;top:214px;font-family:'Liberation Sans';font-weight:400;font-size:16px;line-height:16px;color:#262626;transform:scaleX(0.9833);">Add-ins</span><span class="t" style="left:842.99px;top:316px;font-family:'Liberation Sans';font-weight:400;font-size:17.5px;line-height:17.5px;color:#7f7f7f;transform:scaleX(1.0068);">Republic of the Philippines</span><span class="t" style="left:754.80px;top:344px;font-family:'Liberation Serif';font-weight:400;font-size:27px;line-height:27px;color:#7c7c7c;transform:scaleX(0.9703);-webkit-text-stroke:0.7px #7c7c7c;">Laguna State Polytechnic University</span><span class="t" style="left:872.92px;top:379px;font-family:'Liberation Sans';font-weight:400;font-size:17.5px;line-height:17.5px;color:#7f7f7f;transform:scaleX(0.9767);">Province of Laguna</span><span class="t" style="left:818.80px;top:454px;font-family:'Liberation Sans';font-weight:400;font-size:20px;line-height:20px;color:#000;transform:scaleX(0.8997);-webkit-text-stroke:0.9px #000;">COLLEGE OF ENNGINEERING</span><span class="t" style="left:847.20px;top:514px;font-family:'Liberation Sans';font-weight:400;font-size:20px;line-height:20px;color:#000;transform:scaleX(0.9105);-webkit-text-stroke:0.9px #000;">ON THE JOB TRAINING</span><span class="t" style="left:760.17px;top:691px;font-family:'Liberation Sans';font-weight:400;font-size:20.5px;line-height:20.5px;color:#222;transform:scaleX(1.0296);">Submitted to the College of Engineering</span><span class="t" style="left:842.90px;top:727px;font-family:'Liberation Sans';font-weight:400;font-size:20.5px;line-height:20.5px;color:#222;transform:scaleX(1.0195);">Computer Engineering</span><span class="t" style="left:794.81px;top:902px;font-family:'Liberation Sans';font-weight:400;font-size:20.5px;line-height:20.5px;color:#222;transform:scaleX(0.9941);">In Fulfillment to the Requirements</span><span class="t" style="left:841.80px;top:938px;font-family:'Liberation Sans';font-weight:400;font-size:20.5px;line-height:20.5px;color:#222;transform:scaleX(1.0057);">for On-the-Job Training</span><span class="t" style="left:15.87px;top:985px;font-family:'Liberation Sans';font-weight:400;font-size:16px;line-height:16px;color:#444;transform:scaleX(0.9344);">Page 1 of 44</span><span class="t" style="left:130.40px;top:985px;font-family:'Liberation Sans';font-weight:400;font-size:16px;line-height:16px;color:#444;transform:scaleX(0.9892);">4013 words</span><span class="t" style="left:286.85px;top:985px;font-family:'Liberation Sans';font-weight:400;font-size:16px;line-height:16px;color:#444;transform:scaleX(0.9525);">English (United States)</span><span class="t" style="left:496.80px;top:985px;font-family:'Liberation Sans';font-weight:700;font-size:16px;line-height:16px;color:#262626;transform:scaleX(0.9791);">Accessibility: Investigate</span><span class="t" style="left:1869.80px;top:985px;font-family:'Liberation Sans';font-weight:400;font-size:16px;line-height:16px;color:#444;transform:scaleX(0.9375);">80%</span><span class="t" style="left:262.64px;top:164px;font-family:'Liberation Sans';font-weight:700;font-size:22.5px;line-height:22.5px;color:#505050;transform:scaleX(0.8600);">B</span><span class="t" style="left:297.10px;top:163px;font-family:'Liberation Serif';font-weight:700;font-size:23px;line-height:23px;color:#505050;transform:scaleX(1.3222);font-style:italic;">I</span><span class="t" style="left:330.70px;top:164px;font-family:'Liberation Sans';font-weight:700;font-size:21px;line-height:21px;color:#505050;transform:scaleX(0.9133);">U</span><span class="t" style="left:381.80px;top:166px;font-family:'Liberation Sans';font-weight:400;font-size:19px;line-height:19px;color:#666666;transform:scaleX(0.7935);">abc</span><span class="t" style="left:420.20px;top:168px;font-family:'Liberation Sans';font-weight:700;font-size:17px;line-height:17px;color:#505050;transform:scaleX(1.0364);">X</span><span class="t" style="left:433.60px;top:178px;font-family:'Liberation Sans';font-weight:400;font-size:10px;line-height:10px;color:#3f7bbf;transform:scaleX(0.9167);">2</span><span class="t" style="left:454.40px;top:168px;font-family:'Liberation Sans';font-weight:700;font-size:17px;line-height:17px;color:#505050;transform:scaleX(1.0091);">X</span><span class="t" style="left:467.50px;top:163px;font-family:'Liberation Sans';font-weight:400;font-size:10px;line-height:10px;color:#3f7bbf;transform:scaleX(0.9167);">2</span><span class="t" style="left:562.40px;top:118px;font-family:'Liberation Sans';font-weight:400;font-size:21.5px;line-height:21.5px;color:#5a5a5a;transform:scaleX(0.8926);">Aa</span><span class="t" style="left:736.50px;top:118px;font-family:'Liberation Sans';font-weight:700;font-size:8px;line-height:8px;color:#3f7bbf;transform:scaleX(0.7800);">1</span><span class="t" style="left:736.00px;top:126px;font-family:'Liberation Sans';font-weight:700;font-size:8px;line-height:8px;color:#3f7bbf;transform:scaleX(0.8800);">2</span><span class="t" style="left:736.00px;top:134px;font-family:'Liberation Sans';font-weight:700;font-size:8px;line-height:8px;color:#3f7bbf;transform:scaleX(0.8800);">3</span><span class="t" style="left:791.80px;top:118px;font-family:'Liberation Sans';font-weight:700;font-size:8px;line-height:8px;color:#3f7bbf;transform:scaleX(0.6400);">1</span><span class="t" style="left:796.80px;top:124px;font-family:'Liberation Sans';font-weight:700;font-size:8.5px;line-height:8.5px;color:#3f7bbf;transform:scaleX(0.8200);">a</span><span class="t" style="left:803.70px;top:133px;font-family:'Liberation Sans';font-weight:700;font-size:8px;line-height:8px;color:#3f7bbf;transform:scaleX(0.6500);">i</span><span class="t" style="left:930.30px;top:116px;font-family:'Liberation Sans';font-weight:700;font-size:15.4px;line-height:15.4px;color:#3f7bbf;transform:scaleX(0.9273);">A</span><span class="t" style="left:931.20px;top:128px;font-family:'Liberation Sans';font-weight:700;font-size:13.5px;line-height:13.5px;color:#7e3fb0;transform:scaleX(0.9333);">Z</span><span class="t" style="left:545.60px;top:163px;font-family:'Liberation Sans';font-weight:400;font-size:12px;line-height:12px;color:#666666;transform:scaleX(1.0643);">ab</span><span class="t" style="left:1619.90px;top:138px;font-family:'Liberation Sans';font-weight:700;font-size:14px;line-height:14px;color:#4a4a4a;transform:scaleX(0.8750);">a</span><span class="t" style="left:1629.00px;top:138px;font-family:'Liberation Sans';font-weight:700;font-size:14.3px;line-height:14.3px;color:#8048ad;transform:scaleX(0.8778);">b</span><span class="t" style="left:1627.90px;top:148px;font-family:'Liberation Sans';font-weight:700;font-size:14.5px;line-height:14.5px;color:#4a4a4a;transform:scaleX(0.7889);">a</span><span class="t" style="left:1635.80px;top:147px;font-family:'Liberation Sans';font-weight:400;font-size:15px;line-height:15px;color:#3f7bbf;transform:scaleX(0.8750);-webkit-text-stroke:0.4px #3f7bbf;">c</span>
</body></html>
